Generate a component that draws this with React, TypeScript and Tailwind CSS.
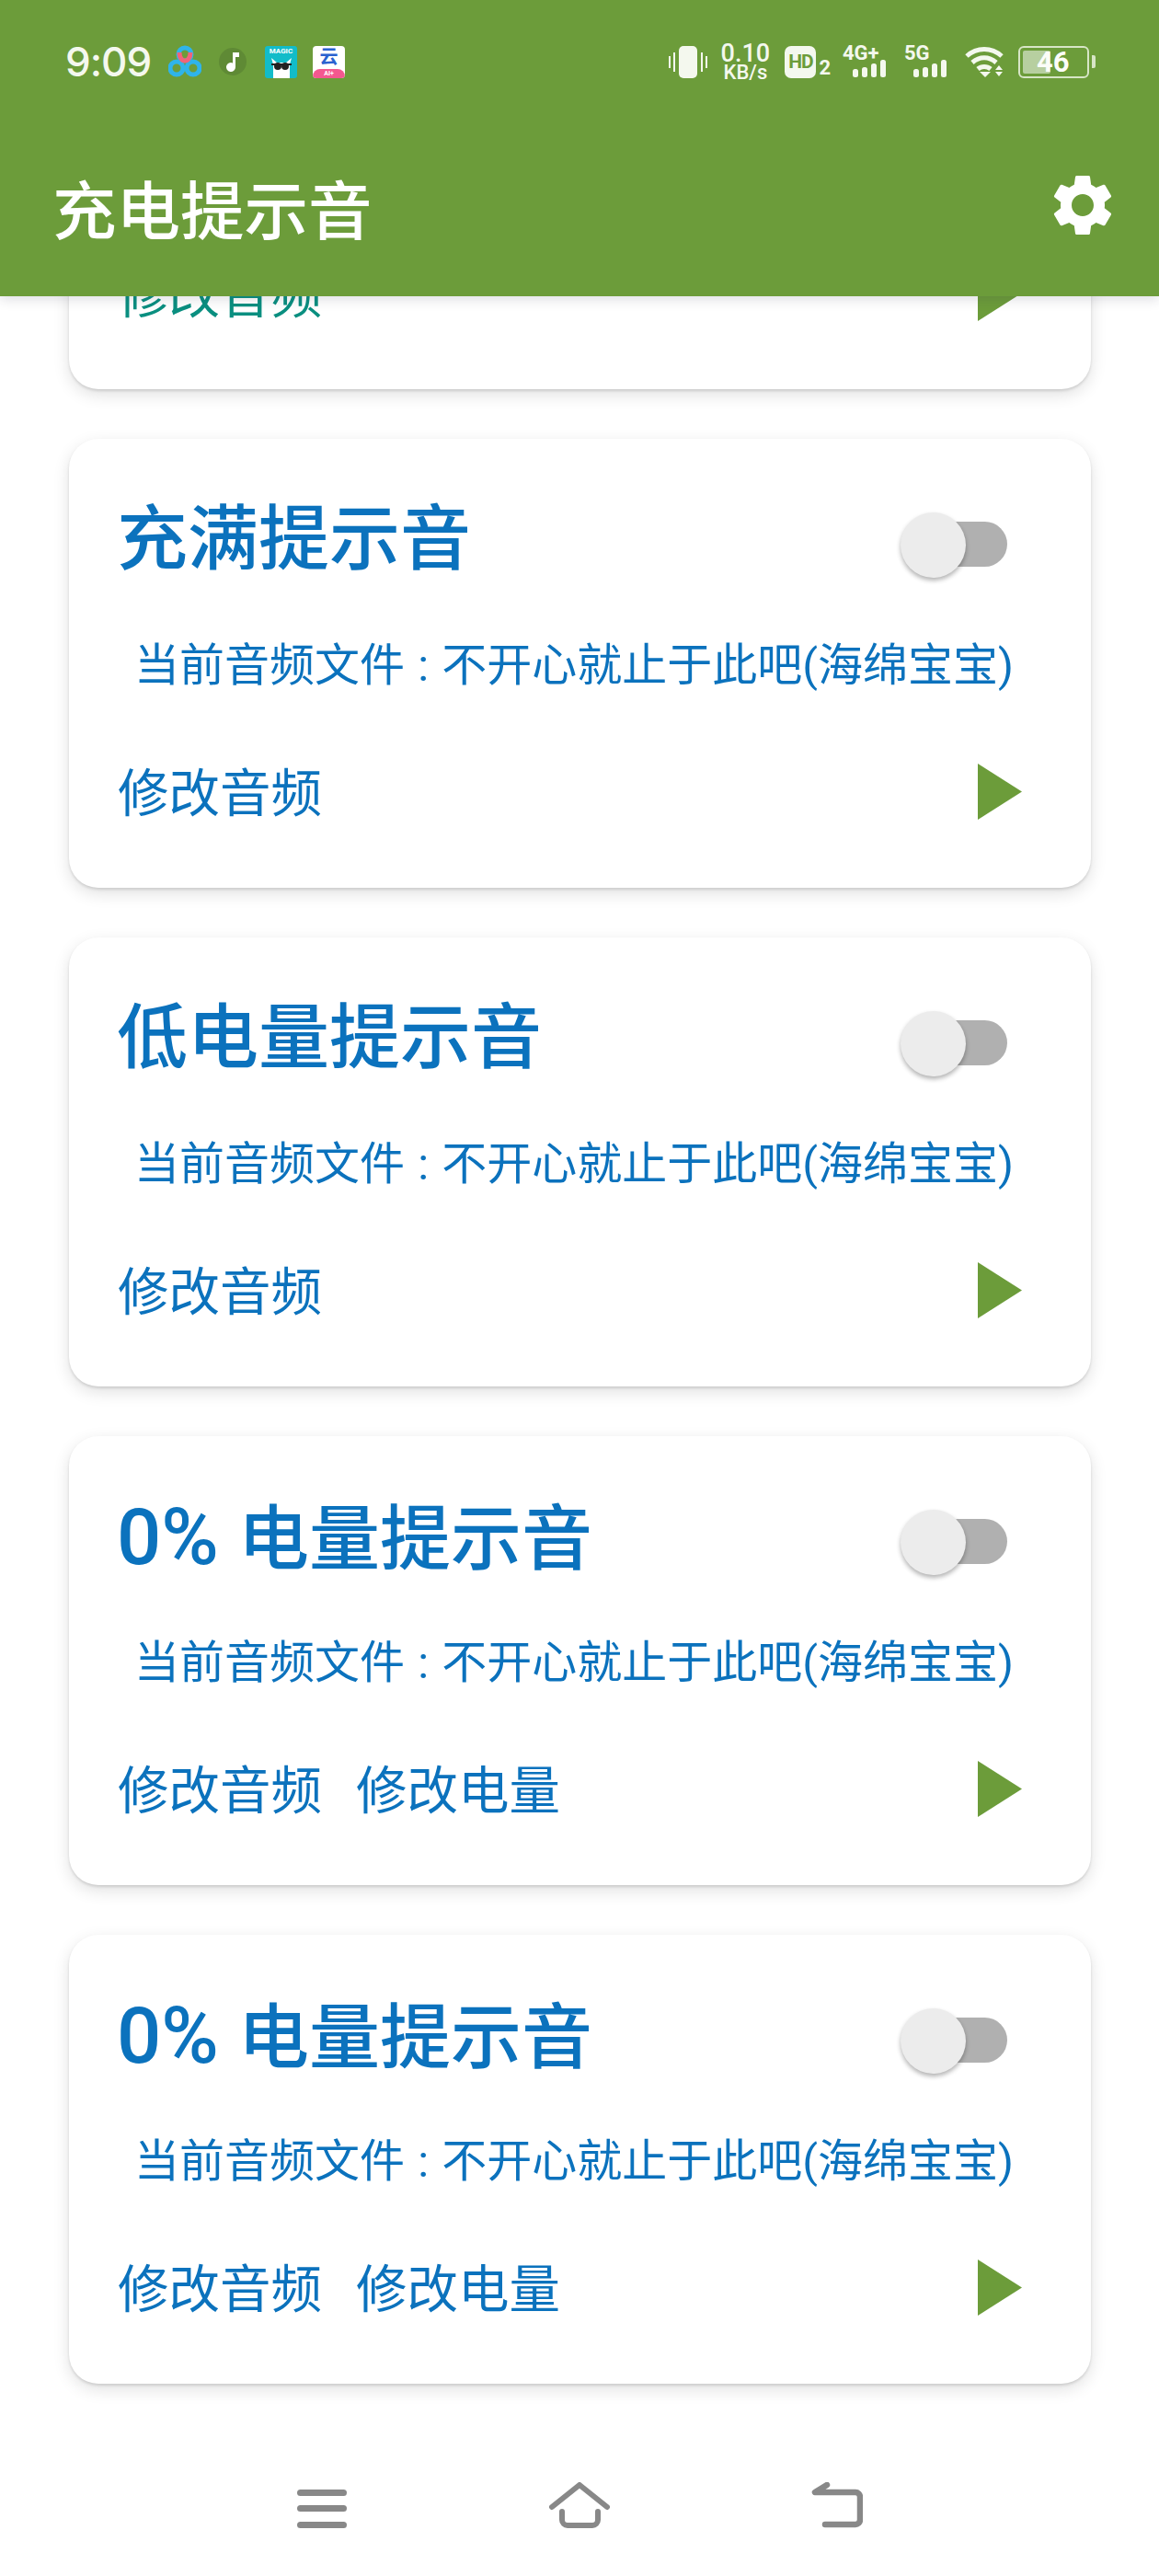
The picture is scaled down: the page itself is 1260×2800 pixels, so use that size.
import React from 'react';
import { MdSettings } from 'react-icons/md';

const FONT = "font-['Roboto','Noto_Sans_CJK_SC',sans-serif]";

const SignalBars: React.FC<{ x: number }> = ({ x }) => (
  <>
    <rect x={x} y="25" width="6" height="9" rx="2.500" />
    <rect x={x + 10} y="23" width="6" height="11" rx="2.500" />
    <rect x={x + 20} y="19" width="6" height="15" rx="2.500" />
    <rect x={x + 30} y="15" width="6" height="19" rx="2.500" />
  </>
);

const StatusBar: React.FC = () => (
  <div className="flex h-[48px] items-center justify-between pl-[71px] pr-[69px] text-[#f4f8ee]">
    <div className="flex items-center">
      <span className="w-[93px] font-['Inter'] text-[44px] font-medium leading-[46px] tracking-[-1px]">9:09</span>
      {/* app notification icons */}
      <svg className="ml-[19px] h-[36px] w-[36px]" viewBox="0 0 36 36" fill="none" strokeWidth="5">
        <circle cx="9" cy="25" r="7" stroke="#2fb4ea" />
        <circle cx="27" cy="25" r="7" stroke="#2fb4ea" />
        <circle cx="18" cy="10" r="7" stroke="#2fb4ea" />
        <path d="M12 8c0 6 3 9 6 9s6-3 6-9" stroke="#f2637a" />
      </svg>
      <svg className="ml-[19px] h-[30px] w-[30px]" viewBox="0 0 30 30">
        <circle cx="15" cy="15" r="15" fill="#5f8a35" />
        <path d="M15 5h7v5h-4v11a5 5 0 1 1-3-4.600z" fill="#fff" />
      </svg>
      <div className="ml-[20px] flex h-[35px] w-[35px] flex-col items-center overflow-hidden rounded-[3px] bg-[#12bcc9]">
        <span className="h-[11px] text-[8px] font-bold leading-[11px] text-white">MAGIC</span>
        <svg className="h-[24px] w-[30px]" viewBox="0 0 30 24">
          <path d="M6 24V9L4 2l6 5h10l6-5-2 7v15z" fill="#fff" />
          <circle cx="11" cy="11" r="4" fill="#222" />
          <circle cx="19" cy="11" r="4" fill="#222" />
          <path d="M4 8h22v2H4z" fill="#222" />
        </svg>
      </div>
      <div className="ml-[17px] flex h-[35px] w-[35px] flex-col items-center overflow-hidden rounded-[4px] bg-white">
        <span className="h-[25px] text-[20px] font-bold leading-[25px] text-[#2a62d0]">云</span>
        <span className="h-[10px] w-full rounded-t-[8px] bg-[#f4588f] text-center text-[7px] font-bold leading-[10px] text-white">AI+</span>
      </div>
    </div>
    <div className="flex items-center">
      <svg className="h-[35px] w-[42px]" viewBox="0 0 42 35" fill="#f4f8ee">
        <rect x="11" y="0" width="20" height="35" rx="5" />
        <rect x="0" y="11" width="2" height="13" />
        <rect x="5" y="7" width="2" height="21" />
        <rect x="35" y="7" width="2" height="21" />
        <rect x="40" y="11" width="2" height="13" />
      </svg>
      <div className="ml-[14px] flex w-[54px] flex-col items-center font-medium">
        <span className="text-[27px] leading-[23px]">0.10</span>
        <span className="text-[22px] leading-[18px]">KB/s</span>
      </div>
      <div className="ml-[16px] flex h-[35px] w-[34px] items-center justify-center rounded-[7px] bg-[#f4f8ee] text-[21px] font-bold leading-none tracking-tighter text-[#6c9c3a]">HD</div>
      <span className="ml-[3px] mt-[13px] text-[22px] font-bold leading-none">2</span>
      <div className="relative ml-[13px] h-[34px] w-[51px]">
        <span className="absolute left-0 top-[-3px] text-[22px] font-bold leading-[22px]">4G+</span>
        <svg className="h-[34px] w-[51px]" viewBox="0 0 51 34" fill="#f4f8ee">
          <SignalBars x={11} />
        </svg>
      </div>
      <div className="relative ml-[16px] h-[34px] w-[50px]">
        <span className="absolute left-0 top-[-3px] text-[22px] font-bold leading-[22px]">5G</span>
        <svg className="h-[34px] w-[50px]" viewBox="0 0 50 34" fill="#f4f8ee">
          <SignalBars x={10} />
        </svg>
      </div>
      <svg className="ml-[16px] h-[33px] w-[44px]" viewBox="0 0 44 33" fill="none" stroke="#f4f8ee" strokeWidth="5">
        <path d="M2 10c11-10 27-10 38 0" />
        <path d="M8 17c8-7 18-7 26 0" />
        <path d="M14 24c4-3.500 10-3.500 14 0" />
        <path d="M16 27h12l-6 6z" fill="#f4f8ee" stroke="none" />
        <path d="M37 20l4 5h-8zM33 27h8l-4 5z" fill="#f4f8ee" stroke="none" />
      </svg>
      <div className="relative ml-[14px] flex h-[35px] w-[77px] items-center rounded-[6px] border-2 border-[#d7e5c6] p-[3px]">
        <div className="h-full w-[30px] rounded-[2px] bg-[#b7cfa0]" />
        <span className="absolute left-[18px] top-[-1px] text-[31px] font-bold leading-[33px] text-[#fbfdf8]">46</span>
      </div>
      <div className="ml-[3px] h-[14px] w-[4px] rounded-r-[2px] bg-[#d7e5c6]" />
    </div>
  </div>
);

const Toggle: React.FC = () => (
  <div className="relative h-[71px] w-[116px]">
    <div className="absolute left-[22px] top-[10px] h-[49px] w-[94px] rounded-full bg-[#b0b0b0]" />
    <div className="absolute left-0 top-0 h-[71px] w-[71px] rounded-full bg-[#ececec] shadow-[0_3px_5px_rgba(0,0,0,0.3)]" />
  </div>
);

// first card is scrolled under the header, so it only has its bottom row
const Card: React.FC<{ title?: string; percent?: boolean; showLevel?: boolean; linkColor?: string }> = ({
  title,
  percent,
  showLevel,
  linkColor = 'text-[#0b72bd]',
}) => (
  <div className="h-[488px] w-[1111px] shrink-0 rounded-[32px] bg-white shadow-[0_2px_3px_rgba(0,0,0,0.12),0_6px_18px_rgba(0,0,0,0.12)]">
    {title ? (
      <>
        <div className="flex h-[217px] items-start justify-between pl-[52px] pr-[91px]">
          <h2 className="mt-[65px] text-[77px] font-medium leading-[90px] text-[#0b72bd]">
            {percent && <span className="text-[85px]">0% </span>}
            {title}
          </h2>
          <div className="mt-[80px]">
            <Toggle />
          </div>
        </div>
        <p className="h-[60px] pl-[71px] text-[49px] leading-[60px] text-[#0b72bd] [word-spacing:2px]">当前音频文件 : 不开心就止于此吧(海绵宝宝)</p>
      </>
    ) : (
      <div className="h-[277px]" />
    )}
    <div className="mt-[71px] flex h-[70px] items-center justify-between pl-[53px] pr-[75px]">
      <div className={`flex gap-[37px] pt-[8px] text-[55.5px] leading-[70px] ${linkColor}`}>
        <span>修改音频</span>
        {showLevel && <span>修改电量</span>}
      </div>
      <svg className="h-[61px] w-[48px]" viewBox="0 0 48 61">
        <path d="M0 0l48 30.500L0 61z" fill="#6c9c3a" />
      </svg>
    </div>
  </div>
);

const App: React.FC = () => (
  <div className={`flex h-[2800px] w-[1260px] flex-col overflow-hidden bg-white ${FONT}`}>
    <header className="relative z-10 h-[322px] shrink-0 bg-[#6c9c3a] pt-[43px] shadow-[0_4px_12px_rgba(40,40,70,0.14)]">
      <StatusBar />
      <div className="mt-[92px] flex items-start justify-between pl-[57px] pr-[43px]">
        <h1 className="mt-[13px] text-[69.5px] font-medium leading-[72px] text-white">充电提示音</h1>
        <MdSettings className="h-[80px] w-[80px] text-white" />
      </div>
    </header>
    <main className="mt-[-387px] flex flex-col items-center gap-[54px] pl-[1px]">
      <Card linkColor="text-[#0a8f80]" />
      <Card title="充满提示音" />
      <Card title="低电量提示音" />
      <Card title="电量提示音" percent showLevel />
      <Card title="电量提示音" percent showLevel />
    </main>
    <nav className="mb-[52px] mt-auto flex h-[50px] items-start pl-[323px]">
      <svg className="mt-[8px] h-[42px] w-[54px]" viewBox="0 0 54 42" fill="#888">
        <rect x="0" y="0" width="54" height="7" rx="3.500" />
        <rect x="0" y="17" width="54" height="7" rx="3.500" />
        <rect x="0" y="35" width="54" height="7" rx="3.500" />
      </svg>
      <svg className="ml-[220px] h-[50px] w-[66px]" viewBox="0 0 66 50" fill="none" stroke="#888" strokeWidth="6" strokeLinecap="round" strokeLinejoin="round">
        <path d="M3 27L33 3l30 24" />
        <path d="M14 32v9a6 6 0 0 0 6 6h27a6 6 0 0 0 6-6v-9" />
      </svg>
      <svg className="ml-[219px] h-[50px] w-[56px]" viewBox="0 0 56 50" fill="none" stroke="#888" strokeWidth="6.500" strokeLinecap="round" strokeLinejoin="round">
        <path d="M17 3L4 11h44a5 5 0 0 1 5 5v25a5 5 0 0 1-5 5H15" />
      </svg>
    </nav>
  </div>
);

export default App;
